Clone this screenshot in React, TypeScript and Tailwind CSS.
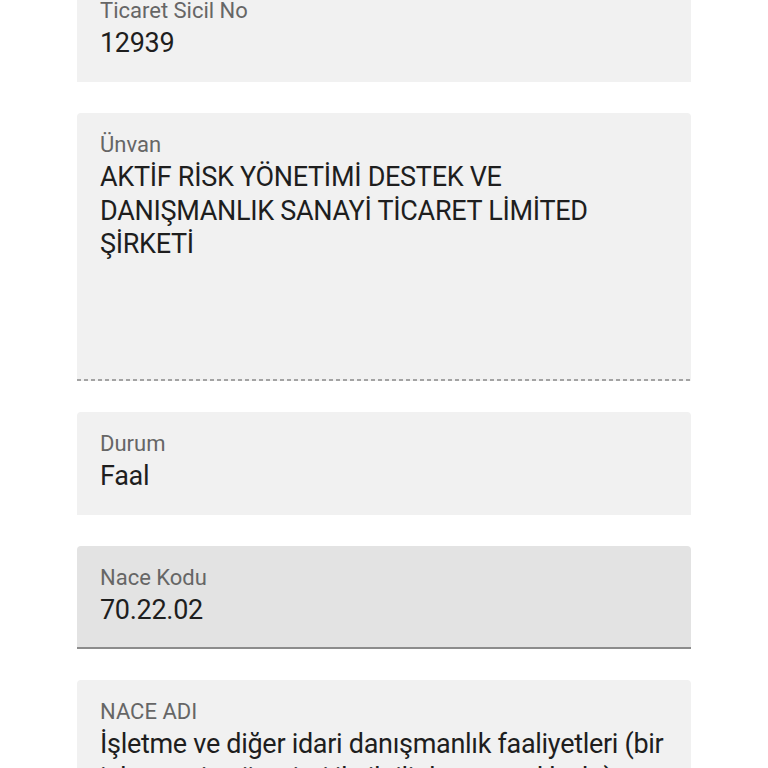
import React from "react";

function Field({
  label,
  children,
  variant = "plain",
  heightClass = "h-[103px]",
}: {
  label: string;
  children: React.ReactNode;
  variant?: "plain" | "dashed" | "active";
  heightClass?: string;
}) {
  const bg = variant === "active" ? "bg-[#e3e3e3]" : "bg-[#f1f1f1]";
  return (
    <div className={`relative w-[614px] ${heightClass} ${bg} rounded-t-[4px] px-[23px] pt-[20px] overflow-hidden`}>
      <div className="text-[22px] leading-[24px] text-[#666666]">{label}</div>
      <div className="mt-[4px] text-[27px] leading-[33.5px] text-[#1e1e1e] tracking-[-0.3px]">{children}</div>
      {variant === "dashed" && (
        <div className="absolute left-0 right-0 bottom-0 h-[2px] bg-[linear-gradient(to_right,#a3a3a3_0px,#a3a3a3_4px,transparent_4px)] bg-[length:7px_2px] bg-repeat-x" />
      )}
      {variant === "active" && (
        <div className="absolute left-0 right-0 bottom-0 h-[2px] bg-[#8c8c8c]" />
      )}
    </div>
  );
}

export default function App() {
  return (
    <div
      className="w-[768px] h-[768px] overflow-hidden bg-white"
      style={{ fontFamily: "Roboto, 'Noto Sans', sans-serif" }}
    >
      <div className="-mt-[21px] pl-[77px] flex flex-col gap-[31px]">
        <Field label="Ticaret Sicil No">12939</Field>
        <Field label="Ünvan" variant="dashed" heightClass="h-[268px]">
          AKTİF RİSK YÖNETİMİ DESTEK VE
          <br />
          DANIŞMANLIK SANAYİ TİCARET LİMİTED
          <br />
          ŞİRKETİ
        </Field>
        <Field label="Durum">Faal</Field>
        <Field label="Nace Kodu" variant="active">
          70.22.02
        </Field>
        <Field label="NACE ADI" heightClass="h-[168px]">
          İşletme ve diğer idari danışmanlık faaliyetleri (bir
          <br />
          işletmenin yönetimi ile ilgili danışmanlık vb.)
        </Field>
      </div>
    </div>
  );
}
